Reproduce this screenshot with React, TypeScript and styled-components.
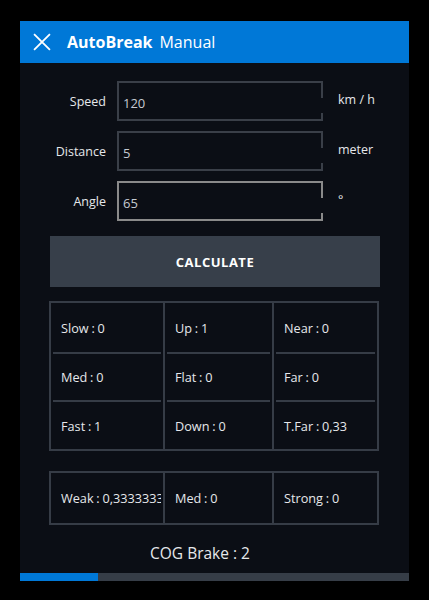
import React from "react";
import styled, { createGlobalStyle } from "styled-components";

const GlobalStyle = createGlobalStyle`
  html, body {
    margin: 0;
    padding: 0;
    background: #000;
    font-family: "Open Sans", "Liberation Sans", sans-serif;
  }
`;

interface Field {
  label: string;
  value: string;
  unit: string;
  focused?: boolean;
}

const fields: Field[] = [
  { label: "Speed", value: "120", unit: "km / h" },
  { label: "Distance", value: "5", unit: "meter" },
  { label: "Angle", value: "65", unit: "°", focused: true },
];

const inputColumns = [
  ["Slow : 0", "Med : 0", "Fast : 1"],
  ["Up : 1", "Flat : 0", "Down : 0"],
  ["Near : 0", "Far : 0", "T.Far : 0,33"],
];

const outputColumns = [["Weak : 0,3333333"], ["Med : 0"], ["Strong : 0"]];

const rowHeights = [51, 48, 47];

export default function App() {
  return (
    <>
      <GlobalStyle />
      <Panel>
        <Header>
          <CloseIcon viewBox="0 0 17 17">
            <path d="M1 1 L16 16 M16 1 L1 16" stroke="#fff" strokeWidth="1.7" />
          </CloseIcon>
          <Title>AutoBreak</Title>
          <SubTitle>Manual</SubTitle>
        </Header>
        <Content>
          <Form>
            {fields.map((f) => (
              <FormRow key={f.label}>
                <Label>{f.label}</Label>
                <InputBox $focused={f.focused}>{f.value}</InputBox>
                <Unit>{f.unit}</Unit>
              </FormRow>
            ))}
          </Form>
          <CalcButton>CALCULATE</CalcButton>
          <Table>
            {inputColumns.map((col, ci) => (
              <Column key={ci} $first={ci === 0}>
                {col.map((text, ri) => (
                  <Cell key={text} style={{ height: rowHeights[ri] }}>
                    <CellInner $last={ri === col.length - 1}>{text}</CellInner>
                  </Cell>
                ))}
              </Column>
            ))}
          </Table>
          <ResultTable>
            {outputColumns.map((col, ci) => (
              <Column key={ci} $first={ci === 0}>
                {col.map((text) => (
                  <Cell key={text} style={{ height: 50 }}>
                    <CellInner $last>{text}</CellInner>
                  </Cell>
                ))}
              </Column>
            ))}
          </ResultTable>
          <Result>COG Brake : 2</Result>
        </Content>
        <Progress>
          <ProgressFill style={{ width: "20%" }} />
        </Progress>
      </Panel>
    </>
  );
}

const Panel = styled.div`
  margin: 21px 0 0 20px;
  width: 389px;
  height: 560px;
  background: #0b0e15;
  display: flex;
  flex-direction: column;
`;

const Header = styled.div`
  height: 42px;
  background: #0078d7;
  display: flex;
  align-items: center;
  padding-left: 13px;
  color: #fff;
`;

const CloseIcon = styled.svg`
  width: 18px;
  height: 18px;
  margin-right: 16px;
`;

const Title = styled.span`
  font-size: 16px;
  font-weight: 700;
  margin-right: 7px;
`;

const SubTitle = styled.span`
  font-size: 16px;
  font-weight: 400;
`;

const Content = styled.div`
  flex: 1;
  display: flex;
  flex-direction: column;
  padding-top: 18px;
`;

const Form = styled.div`
  display: flex;
  flex-direction: column;
  gap: 10px;
`;

const FormRow = styled.div`
  display: flex;
  align-items: center;
  height: 40px;
`;

const Label = styled.div`
  width: 86px;
  text-align: right;
  font-size: 12.5px;
  color: #e6e8eb;
  margin-right: 11px;
`;

const InputBox = styled.div<{ $focused?: boolean }>`
  position: relative;
  box-sizing: border-box;
  width: 206px;
  height: 40px;
  border: 2px solid ${(p) => (p.$focused ? "#8a8a8a" : "#3a3f48")};
  display: flex;
  align-items: flex-end;
  padding: 0 0 7px 4px;
  font-size: 13px;
  color: #c5cad1;

  &::after {
    content: "";
    position: absolute;
    right: -2px;
    top: 15px;
    bottom: 6px;
    width: 2px;
    background: #0b0e15;
  }
`;

const Unit = styled.div`
  margin-left: 15px;
  font-size: 12.5px;
  color: #e6e8eb;
  align-self: flex-start;
  padding-top: 10px;
`;

const CalcButton = styled.div`
  margin: 15px 0 0 30px;
  width: 330px;
  height: 51px;
  background: #373f4a;
  color: #fff;
  font-size: 13px;
  font-weight: 700;
  letter-spacing: 0.5px;
  display: flex;
  align-items: center;
  justify-content: center;
`;

const Table = styled.div`
  margin: 14px 0 0 29px;
  width: 330px;
  box-sizing: border-box;
  border: 2px solid #363c46;
  display: grid;
  grid-template-columns: 112px 109px 105px;
`;

const ResultTable = styled(Table)`
  margin-top: 20px;
`;

const Column = styled.div<{ $first?: boolean }>`
  display: flex;
  flex-direction: column;
  border-left: ${(p) => (p.$first ? "none" : "2px solid #363c46")};
  min-width: 0;
`;

const Cell = styled.div`
  display: flex;
  min-width: 0;
`;

const CellInner = styled.div<{ $last?: boolean }>`
  flex: 1;
  min-width: 0;
  margin: 0 2px;
  padding-left: 8px;
  display: flex;
  align-items: center;
  border-bottom: ${(p) => (p.$last ? "none" : "2px solid #363c46")};
  font-size: 12.7px;
  word-spacing: -0.5px;
  color: #e6e8eb;
  white-space: nowrap;
  overflow: hidden;
`;

const Result = styled.div`
  margin-top: 17px;
  padding-right: 29px;
  text-align: center;
  font-size: 15.5px;
  color: #e6e8eb;
`;

const Progress = styled.div`
  height: 8px;
  background: #363d47;
  display: flex;
`;

const ProgressFill = styled.div`
  background: #0078d7;
  height: 100%;
`;
